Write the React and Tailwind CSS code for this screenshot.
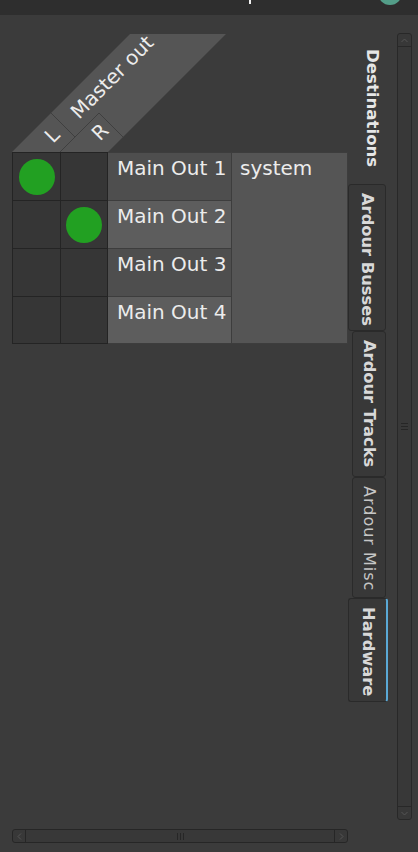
import React from 'react'

const rows = [
  { name: 'Main Out 1', bg: 'bg-[#4e4e4e]', dots: [true, false] },
  { name: 'Main Out 2', bg: 'bg-[#5d5d5d]', dots: [false, true] },
  { name: 'Main Out 3', bg: 'bg-[#4e4e4e]', dots: [false, false] },
  { name: 'Main Out 4', bg: 'bg-[#5d5d5d]', dots: [false, false] },
]

const ColumnHeader = () => (
  <svg width="240" height="119" overflow="visible" className="block shrink-0">
    <polygon points="12,119 108,119 226,1 130,1" fill="#555555" />
    <line x1="60" y1="119" x2="99" y2="80" stroke="#3f3f3f" strokeWidth="1" />
    <line x1="51" y1="80" x2="75" y2="104" stroke="#3f3f3f" strokeWidth="1" />
    <line x1="99" y1="80" x2="123" y2="104" stroke="#3f3f3f" strokeWidth="1" />
    <g fill="#ececec" fontFamily="'DejaVu Sans', sans-serif" fontSize="20" textAnchor="middle" dominantBaseline="central">
      <text x="112" y="44" transform="rotate(-45 112 44)">Master out</text>
      <text x="52" y="102" transform="rotate(-45 52 102)">L</text>
      <text x="100" y="99" transform="rotate(-45 100 99)">R</text>
    </g>
  </svg>
)

const Tab = ({ label, bold = true, className = '' }) => (
  <div className={`shrink-0 flex justify-center pt-2 border border-[#2a2a2a] rounded-[3px] bg-[#383838] ${className}`}>
    <span
      className={`[writing-mode:vertical-rl] leading-[20px] ${
        bold ? 'text-[16.3px] font-bold text-[#d8d8d8]' : 'text-[16px] font-normal text-[#c6c6c6] tracking-[1px]'
      }`}
    >
      {label}
    </span>
  </div>
)

export default function App() {
  return (
    <div className="w-[418px] h-[852px] overflow-hidden bg-[#3b3b3b] flex flex-col font-['DejaVu_Sans',sans-serif] text-[#ececec]">
      {/* top window bar */}
      <div className="h-[15px] shrink-0 bg-[#2e2e2e] flex items-start overflow-hidden">
        <div className="ml-[249px] w-[2px] h-[4px] bg-[#f0f0f0]" />
        <div className="ml-[127px] -mt-[19px] w-[24px] h-[24px] rounded-full bg-[#539d88]" />
      </div>

      <div className="flex flex-1 min-h-0">
        {/* matrix */}
        <div className="w-[348px] shrink-0 flex flex-col">
          <div className="mt-[18px]">
            <ColumnHeader />
          </div>
          <div className="flex ml-[12px]">
            <div className="flex flex-col">
              {rows.map((r, i) => (
                <div key={i} className="flex">
                  {r.dots.map((on, j) => (
                    <div
                      key={j}
                      className={`w-[48px] h-[48px] bg-[#363636] border-l border-t border-[#242424] flex items-center justify-center ${
                        j === 1 ? 'border-r' : ''
                      } ${i === 3 ? 'border-b' : ''}`}
                    >
                      {on && <div className="w-[36px] h-[36px] rounded-full bg-[#22a022]" />}
                    </div>
                  ))}
                </div>
              ))}
            </div>
            <div className="flex flex-col w-[124px]">
              {rows.map((r, i) => (
                <div
                  key={i}
                  className={`h-[48px] ${r.bg} border-t border-r border-[#3d3d3d] pl-[9px] pt-[3px] text-[20px] leading-[24px] ${
                    i === 3 ? 'border-b' : ''
                  }`}
                >
                  {r.name}
                </div>
              ))}
            </div>
            <div className="w-[116px] h-[192px] bg-[#555555] border-t border-r border-b border-[#3d3d3d] pl-[8px] pt-[3px] text-[20px] leading-[24px]">
              system
            </div>
          </div>

          <div className="flex-1" />

          {/* horizontal scrollbar */}
          <div className="ml-[12px] mb-[9px] w-[336px] h-[14px] rounded-[3px] border border-[#262626] bg-[#383838] flex">
            <div className="w-[13px] border-r border-[#262626] flex items-center justify-center">
              <svg width="5" height="7" viewBox="0 0 5 7">
                <path d="M4 0.5 L1 3.5 L4 6.5" fill="none" stroke="#555" strokeWidth="1" />
              </svg>
            </div>
            <div className="flex-1 flex items-center justify-center gap-[2px]">
              <div className="w-px h-[7px] bg-[#262626]" />
              <div className="w-px h-[7px] bg-[#262626]" />
              <div className="w-px h-[7px] bg-[#262626]" />
            </div>
            <div className="w-[13px] border-l border-[#262626] flex items-center justify-center">
              <svg width="5" height="7" viewBox="0 0 5 7">
                <path d="M1 0.5 L4 3.5 L1 6.5" fill="none" stroke="#555" strokeWidth="1" />
              </svg>
            </div>
          </div>
        </div>

        {/* vertical tabs */}
        <div className="w-[40px] shrink-0 flex flex-col items-start pt-[34px]">
          <div className="w-[40px] flex justify-center pl-[7px]">
            <span className="[writing-mode:vertical-rl] text-[16.6px] leading-[20px] font-bold text-[#e6e6e6]">
              Destinations
            </span>
          </div>
          <div className="mt-[17px] flex flex-col">
            <Tab label="Ardour Busses" className="w-[38px] h-[147px]" />
            <Tab label="Ardour Tracks" className="ml-[4px] w-[34px] h-[146px]" />
            <Tab label="Ardour Misc" bold={false} className="ml-[4px] w-[34px] h-[121px]" />
            <Tab label="Hardware" className="w-[40px] h-[104px] border-r-2 border-r-[#5aa9d6] bg-[#3a3a3a]" />
          </div>
        </div>

        {/* vertical scrollbar */}
        <div className="ml-[9px] mt-[18px] w-[15px] h-[787px] rounded-[3px] border border-[#282828] bg-[#383838] flex flex-col">
          <div className="h-[13px] border-b border-[#282828] flex items-center justify-center">
            <svg width="7" height="5" viewBox="0 0 7 5">
              <path d="M0.5 4 L3.5 1 L6.5 4" fill="none" stroke="#555" strokeWidth="1" />
            </svg>
          </div>
          <div className="flex-1 flex flex-col items-center justify-center gap-[2px]">
            <div className="w-[7px] h-px bg-[#262626]" />
            <div className="w-[7px] h-px bg-[#262626]" />
            <div className="w-[7px] h-px bg-[#262626]" />
          </div>
          <div className="h-[13px] border-t border-[#282828] flex items-center justify-center">
            <svg width="7" height="5" viewBox="0 0 7 5">
              <path d="M0.5 1 L3.5 4 L6.5 1" fill="none" stroke="#555" strokeWidth="1" />
            </svg>
          </div>
        </div>
      </div>
    </div>
  )
}
